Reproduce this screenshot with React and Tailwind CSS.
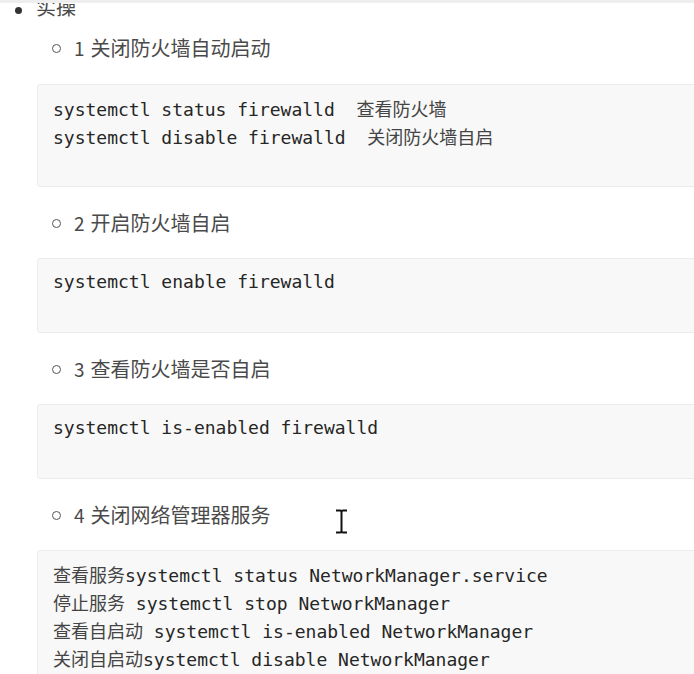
import React from "react";

function Item({ children, mt = "mt-[22px]" }) {
  return (
    <div className={"flex items-center h-[28px] pl-[52px] text-[20px] leading-[28px] text-[#4a4a4a] [font-family:'Noto_Sans_CJK_SC','Noto_Sans',sans-serif] " + mt}>
      <span className="w-[9px] h-[9px] rounded-full border-[1.5px] border-[#555] mr-[13px]" />
      <span className="text-[19px]">{children[0]}</span>
      <span className="ml-[6px]">{children[1]}</span>
    </div>
  );
}

function Code({ lines, mt = "mt-[21px]" }) {
  return (
    <div className={"ml-[37px] w-[690px] bg-[#f8f8f8] border border-[#ececec] rounded-[3px] pt-[9px] pb-[8px] pl-[15px] text-[18px] leading-[28px] text-[#262626] whitespace-pre [font-family:'DejaVu_Sans_Mono','Noto_Sans_CJK_SC',monospace] " + mt}>
      {lines.map((l, i) => (
        <div key={i} className="h-[28px]">
          {l.map((seg, j) =>
            seg.cjk ? (
              <span key={j} className="text-[#444] [font-family:'Noto_Sans_CJK_SC',sans-serif]">{seg.t}</span>
            ) : (
              <span key={j}>{seg.t}</span>
            )
          )}
        </div>
      ))}
    </div>
  );
}

const c = (t) => ({ t, cjk: true });
const m = (t) => ({ t });

export default function App() {
  return (
    <div className="relative w-[694px] h-[674px] overflow-hidden bg-white">
      <div className="flex items-center h-[28px] mt-[-7px] pl-[15px] text-[20px] leading-[28px] text-[#4a4a4a] [font-family:'Noto_Sans_CJK_SC','Noto_Sans',sans-serif]">
        <span className="w-[7px] h-[7px] rounded-full bg-[#333] mr-[14px] mt-[6px]" />
        <span>实操</span>
      </div>

      <Item mt="mt-[13px]">{["1", "关闭防火墙自动启动"]}</Item>
      <Code
        mt="mt-[22px]"
        lines={[
          [m("systemctl status firewalld  "), c("查看防火墙")],
          [m("systemctl disable firewalld  "), c("关闭防火墙自启")],
          [m(" ")],
        ]}
      />

      <Item>{["2", "开启防火墙自启"]}</Item>
      <Code lines={[[m("systemctl enable firewalld")], [m(" ")]]} />

      <Item>{["3", "查看防火墙是否自启"]}</Item>
      <Code lines={[[m("systemctl is-enabled firewalld")], [m(" ")]]} />

      <Item>{["4", "关闭网络管理器服务"]}</Item>
      <Code
        lines={[
          [c("查看服务"), m("systemctl status NetworkManager.service")],
          [c("停止服务"), m(" systemctl stop NetworkManager")],
          [c("查看自启动"), m(" systemctl is-enabled NetworkManager")],
          [c("关闭自启动"), m("systemctl disable NetworkManager")],
          [m(" ")],
        ]}
      />

      <div className="absolute top-0 left-0 w-full h-[3px] bg-[#eeeeee]" />

      <svg className="absolute left-[335px] top-[509px]" width="13" height="25" viewBox="0 0 13 25">
        <path d="M1 1.5 H5 Q6.5 1.5 6.5 3 V22 Q6.5 23.5 5 23.5 H1 M12 1.5 H8 Q6.5 1.5 6.5 3 M12 23.5 H8 Q6.5 23.5 6.5 22" stroke="#111" strokeWidth="2" fill="none" />
      </svg>
    </div>
  );
}
